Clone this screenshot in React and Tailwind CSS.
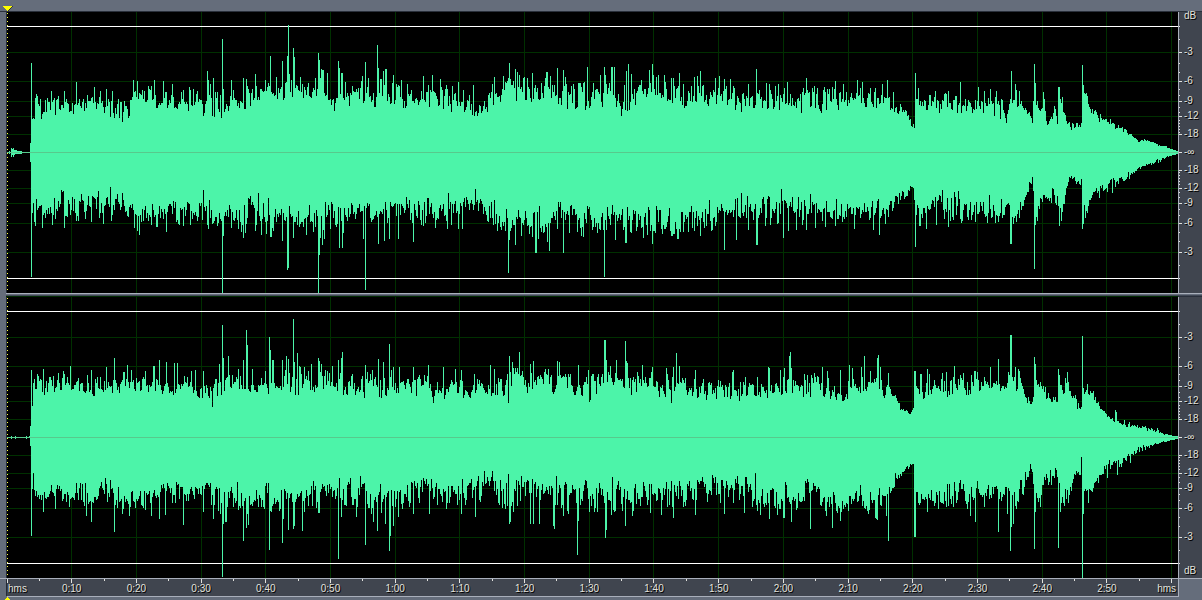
import React from 'react';

const SECONDS = 181;
const COLUMNS = 1171;
const HEIGHT = 281;
const MIDDLE = 140;
const DB_LABELS = [3, 6, 9, 12, 18];

// Each side of a channel is described by
//   body:  [column, lowest level, usual peak] key points
//   peaks: column, level pairs that stand out of the body
const LEFT_UP = {
  seed: 11,
  body: [
    [24, 36, 56], [60, 38, 52], [85, 44, 56], [105, 34, 54], [120, 36, 50], [128, 48, 66], [170, 44, 62],
    [214, 38, 64], [250, 50, 66], [290, 52, 70], [340, 48, 60], [360, 48, 70], [400, 46, 62], [440, 42, 62],
    [467, 36, 54], [480, 42, 54], [500, 50, 70], [560, 50, 70], [570, 42, 64], [600, 50, 70], [615, 38, 60],
    [640, 56, 74], [680, 44, 64], [720, 48, 64], [735, 40, 58], [780, 42, 62], [850, 46, 64], [885, 42, 56],
    [895, 35, 45], [907, 24, 32], [908, 38, 58], [940, 36, 56], [1003, 34, 54], [1004, 50, 68], [1012, 42, 60],
    [1025, 26, 34], [1027, 52, 66], [1036, 34, 56], [1040, 26, 32], [1048, 32, 46], [1050, 26, 34],
    [1052, 54, 62], [1057, 38, 48], [1060, 22, 30], [1074, 25, 32], [1076, 56, 64], [1085, 36, 44],
    [1093, 29, 35], [1103, 25, 31], [1114, 20, 26], [1125, 15, 18], [1131, 10, 11], [1138, 12, 13],
    [1150, 7, 9], [1160, 4, 5], [1170, 1, 1],
  ],
  peaks: [
    2, 1, 4, 4, 5, 3, 6, 4, 7, 2, 8, 2, 9, 2, 10, 1, 11, 1, 12, 1, 13, 1, 14, 1, 23, 9, 24, 89, 25, 33, 30, 56,
    44, 61, 51, 56, 57, 61, 69, 70, 87, 65, 93, 61, 99, 63,
    105, 61, 111, 53, 115, 30, 117, 51, 123, 52, 126, 72, 130, 71, 141, 66, 147, 72, 156, 71, 165, 68, 176, 62,
    186, 63, 196, 36, 200, 81, 201, 72, 206, 74, 214, 34, 215, 113, 224, 72, 236, 74, 239, 73, 248, 78, 258, 72,
    263, 96, 269, 75, 275, 91, 280, 96, 281, 127, 282, 78, 286, 104, 287, 95, 290, 66, 293, 75, 301, 69, 308, 74,
    311, 99, 312, 92, 313, 74, 314, 83, 315, 82, 316, 82, 320, 79, 327, 41, 331, 91, 332, 84, 334, 79, 335, 79,
    338, 70, 355, 76, 358, 90, 361, 74, 370, 107, 371, 84, 373, 73, 374, 73, 376, 81, 378, 83, 379, 83, 386, 77,
    394, 72, 398, 44, 400, 68, 416, 76, 421, 67, 425, 77, 433, 73, 439, 67, 445, 66, 451, 70, 466, 67, 467, 36,
    485, 68, 487, 75, 496, 76, 501, 74, 502, 89, 508, 83, 510, 80, 512, 77, 520, 74, 525, 79, 539, 80, 540, 80,
    543, 76, 550, 84, 556, 82, 558, 75, 560, 43, 571, 69, 580, 85, 586, 69, 593, 77, 597, 85, 598, 77, 604, 85,
    605, 85, 607, 85, 614, 36, 619, 81, 621, 88, 624, 78, 634, 72, 642, 82, 645, 88, 646, 77, 649, 75, 651, 77,
    657, 77, 664, 74, 666, 74, 672, 79, 687, 75, 690, 76, 693, 81, 708, 74, 712, 76, 717, 73, 723, 73, 734, 40,
    741, 68, 749, 83, 759, 69, 762, 68, 768, 66, 771, 68, 780, 70, 799, 74, 807, 66, 828, 71, 836, 68, 850, 72,
    855, 70, 868, 64, 875, 68, 880, 72, 886, 60, 908, 79, 911, 64, 923, 57, 928, 61, 941, 61, 953, 70, 971, 65,
    977, 61, 983, 63, 989, 61, 999, 29, 1004, 81, 1008, 68, 1012, 61, 1027, 88, 1028, 69, 1036, 60, 1047, 46,
    1051, 65, 1052, 65, 1055, 55, 1075, 87, 1076, 67, 1093, 38, 1103, 33,
  ],
};

const LEFT_DOWN = {
  seed: 23,
  body: [
    [24, 48, 66], [60, 38, 66], [80, 44, 66], [110, 38, 64], [125, 50, 70], [170, 46, 68], [195, 44, 66],
    [215, 50, 72], [250, 44, 74], [290, 56, 76], [330, 52, 76], [350, 52, 66], [400, 46, 70], [440, 44, 66],
    [467, 42, 64], [485, 42, 68], [500, 55, 76], [560, 50, 76], [600, 54, 76], [640, 56, 80], [670, 50, 78],
    [700, 50, 72], [735, 42, 68], [780, 44, 70], [840, 50, 68], [880, 48, 66], [892, 40, 50], [906, 28, 36],
    [908, 50, 68], [940, 38, 66], [970, 44, 68], [1002, 44, 66], [1004, 60, 74], [1012, 52, 66], [1018, 38, 44],
    [1025, 24, 32], [1028, 56, 72], [1035, 40, 48], [1050, 36, 50], [1052, 58, 72], [1058, 38, 46],
    [1062, 22, 30], [1074, 22, 30], [1076, 52, 68], [1085, 38, 46], [1100, 30, 40], [1115, 22, 30],
    [1130, 12, 18], [1150, 6, 10], [1160, 3, 4], [1170, 1, 1],
  ],
  peaks: [
    2, 1, 4, 4, 5, 2, 6, 4, 7, 2, 8, 1, 9, 1, 10, 1, 11, 1, 12, 1, 13, 1, 14, 1, 23, 9, 24, 124, 28, 73, 35, 75,
    45, 72, 54, 37, 57, 75, 71, 68, 84, 69, 91, 38, 96, 71,
    103, 34, 127, 75, 130, 78, 132, 82, 144, 72, 149, 74, 150, 74, 159, 79, 176, 73, 183, 72, 196, 37, 200, 72,
    201, 76, 215, 141, 216, 83, 224, 75, 236, 85, 238, 80, 248, 78, 254, 82, 259, 81, 263, 84, 264, 84, 275, 88,
    280, 117, 281, 115, 286, 85, 299, 82, 308, 74, 311, 141, 312, 102, 313, 85, 315, 92, 317, 86, 323, 76,
    332, 95, 335, 95, 336, 80, 356, 86, 358, 137, 371, 91, 377, 88, 382, 86, 391, 86, 406, 89, 416, 73, 428, 75,
    440, 76, 451, 76, 455, 76, 468, 36, 490, 78, 501, 120, 502, 87, 508, 92, 514, 83, 522, 81, 525, 84, 528, 100,
    529, 100, 531, 86, 540, 89, 542, 98, 550, 76, 556, 100, 562, 80, 574, 83, 576, 84, 585, 77, 590, 80, 597, 124,
    608, 87, 618, 90, 619, 90, 623, 79, 636, 85, 640, 82, 645, 91, 654, 76, 663, 78, 666, 81, 667, 81, 670, 86,
    671, 86, 673, 79, 687, 78, 693, 83, 704, 78, 717, 97, 729, 87, 734, 40, 741, 77, 749, 92, 750, 92, 763, 72,
    774, 36, 776, 85, 781, 78, 789, 77, 799, 77, 803, 41, 808, 75, 818, 74, 847, 76, 866, 77, 872, 82, 878, 71,
    908, 94, 912, 73, 913, 73, 919, 76, 929, 72, 941, 74, 955, 68, 968, 69, 980, 70, 997, 62, 1003, 91, 1004, 91,
    1006, 71, 1009, 69, 1012, 65, 1027, 116, 1028, 72, 1030, 68, 1044, 50, 1052, 73, 1054, 68, 1075, 76,
    1078, 65, 1092, 45, 1105, 40, 1121, 19, 1129, 18, 1140, 12,
  ],
};

const RIGHT_UP = {
  seed: 37,
  body: [
    [24, 38, 56], [60, 44, 60], [100, 38, 56], [130, 46, 60], [170, 42, 60], [205, 38, 54], [220, 46, 62],
    [255, 44, 60], [290, 46, 68], [350, 42, 60], [360, 40, 64], [400, 40, 60], [440, 40, 58], [490, 40, 56],
    [502, 46, 66], [560, 44, 62], [580, 38, 58], [600, 48, 64], [665, 42, 60], [700, 38, 56], [757, 37, 52],
    [765, 44, 60], [800, 40, 60], [835, 38, 58], [870, 46, 64], [888, 32, 44], [903, 22, 26], [907, 28, 32],
    [908, 40, 58], [950, 42, 60], [1000, 44, 60], [1012, 48, 62], [1020, 30, 40], [1024, 28, 34], [1028, 52, 60],
    [1040, 34, 48], [1050, 31, 38], [1052, 46, 60], [1056, 38, 48], [1060, 48, 58], [1070, 26, 36],
    [1074, 26, 32], [1076, 44, 52], [1090, 32, 38], [1102, 18, 22], [1115, 12, 18], [1130, 8, 12], [1150, 4, 8],
    [1158, 2, 3], [1170, 1, 1],
  ],
  peaks: [
    4, 1, 8, 1, 19, 1, 22, 1, 23, 11, 24, 67, 25, 31, 30, 63, 36, 68, 51, 64, 56, 66, 63, 71, 80, 62, 84, 67,
    93, 60, 99, 70, 107, 79, 116, 65, 117, 65, 120, 72, 124, 67, 138, 66, 146, 71, 147, 71, 152, 77, 159, 75,
    167, 74, 170, 74, 184, 66, 188, 67, 196, 66, 205, 30, 212, 73, 215, 112, 216, 79, 221, 81, 231, 68, 236, 77,
    239, 107, 240, 92, 245, 68, 258, 66, 262, 100, 263, 87, 265, 77, 266, 77, 275, 77, 279, 81, 281, 78, 286, 118,
    287, 75, 290, 84, 292, 71, 297, 70, 304, 73, 311, 79, 312, 76, 314, 73, 325, 71, 331, 77, 334, 79, 335, 85,
    358, 72, 365, 67, 371, 78, 376, 75, 382, 93, 384, 67, 386, 70, 392, 70, 406, 70, 421, 72, 426, 34, 436, 70,
    448, 68, 454, 67, 467, 63, 483, 72, 487, 68, 501, 34, 502, 81, 505, 75, 512, 85, 523, 73, 526, 76, 538, 68,
    550, 76, 552, 75, 571, 72, 581, 67, 597, 97, 598, 97, 599, 77, 603, 71, 609, 77, 618, 96, 619, 76, 620, 74,
    635, 72, 645, 70, 659, 69, 664, 34, 666, 70, 669, 84, 672, 71, 688, 67, 711, 57, 725, 65, 726, 67, 738, 60,
    750, 60, 761, 70, 762, 69, 773, 67, 777, 69, 782, 81, 783, 85, 784, 69, 800, 62, 815, 70, 820, 66, 833, 67,
    842, 72, 845, 69, 854, 70, 857, 81, 863, 66, 870, 79, 871, 82, 873, 70, 881, 64, 907, 66, 908, 66, 913, 63,
    914, 63, 920, 68, 927, 57, 935, 64, 939, 65, 947, 71, 951, 58, 964, 62, 967, 66, 968, 66, 977, 60, 983, 70,
    991, 78, 1001, 65, 1003, 102, 1004, 102, 1008, 70, 1011, 68, 1012, 66, 1027, 80, 1028, 73, 1033, 55, 1051, 68,
    1052, 62, 1058, 59, 1060, 65, 1075, 101, 1076, 49, 1080, 53, 1086, 46, 1108, 27, 1109, 25,
  ],
};

const RIGHT_DOWN = {
  seed: 53,
  body: [
    [24, 50, 56], [35, 46, 64], [60, 48, 66], [100, 42, 62], [110, 50, 72], [130, 50, 68], [160, 46, 66],
    [200, 44, 60], [215, 46, 74], [245, 46, 70], [290, 48, 72], [320, 42, 64], [360, 42, 70], [390, 48, 72],
    [405, 40, 62], [450, 44, 64], [480, 36, 62], [500, 38, 70], [520, 46, 72], [560, 42, 70], [590, 40, 68],
    [620, 48, 70], [660, 42, 68], [710, 36, 62], [740, 40, 64], [765, 48, 74], [800, 44, 66], [820, 50, 76],
    [850, 46, 68], [870, 46, 78], [885, 36, 50], [895, 34, 38], [903, 22, 28], [907, 25, 28], [909, 50, 64],
    [950, 46, 66], [1000, 46, 66], [1008, 54, 70], [1015, 36, 56], [1023, 22, 32], [1028, 50, 68],
    [1040, 32, 48], [1050, 26, 38], [1053, 50, 68], [1064, 48, 60], [1066, 36, 42], [1073, 28, 38],
    [1074, 18, 20], [1076, 48, 64], [1090, 36, 48], [1104, 18, 32], [1112, 20, 30], [1125, 12, 20],
    [1140, 6, 11], [1158, 3, 4], [1170, 1, 1],
  ],
  peaks: [
    4, 1, 8, 1, 19, 1, 23, 8, 24, 98, 26, 35, 36, 74, 48, 71, 62, 69, 79, 78, 84, 84, 107, 94, 115, 76, 122, 78,
    138, 72, 144, 78, 152, 81, 158, 77, 176, 87, 196, 74, 206, 81, 215, 139, 216, 86, 218, 84, 219, 84, 236, 103,
    239, 90, 241, 87, 262, 112, 263, 73, 275, 105, 276, 81, 281, 92, 286, 91, 287, 88, 295, 93, 297, 74, 311, 75,
    312, 75, 331, 121, 334, 79, 349, 79, 358, 107, 366, 84, 370, 93, 378, 86, 382, 113, 383, 98, 386, 88, 391, 79,
    406, 76, 422, 76, 439, 71, 454, 76, 468, 79, 477, 33, 485, 33, 501, 36, 502, 86, 503, 84, 506, 74, 523, 86,
    526, 86, 532, 86, 546, 88, 547, 91, 561, 76, 570, 117, 571, 83, 582, 74, 598, 100, 599, 92, 604, 77, 618, 88,
    625, 78, 643, 75, 654, 77, 666, 80, 688, 77, 717, 76, 737, 75, 748, 35, 753, 77, 762, 81, 776, 80, 777, 80,
    784, 84, 803, 91, 819, 78, 825, 90, 833, 83, 869, 81, 870, 82, 879, 78, 881, 103, 907, 99, 908, 99, 920, 74,
    931, 71, 946, 69, 963, 78, 968, 84, 991, 94, 1000, 76, 1003, 113, 1004, 89, 1006, 86, 1027, 111, 1028, 74,
    1031, 64, 1033, 69, 1051, 110, 1053, 74, 1075, 141, 1076, 76, 1081, 65, 1085, 54, 1100, 40, 1110, 37,
    1123, 25,
  ],
};

// Small seeded generator, so that a side always has the same grain
function createRandom(seed) {
  let state = seed;
  return () => {
    state = (state * 16807) % 2147483647;
    return state / 2147483647;
  };
}

function buildLevels({ seed, body, peaks }) {
  const random = createRandom(seed * 7919);
  const levels = new Array(COLUMNS).fill(0);
  let swell = 0.5;
  for (let i = 1; i < body.length; i++) {
    const [x0, low0, high0] = body[i - 1];
    const [x1, low1, high1] = body[i];
    for (let x = x0; x <= x1; x++) {
      const t = (x - x0) / (x1 - x0);
      const low = low0 + (low1 - low0) * t;
      const high = high0 + (high1 - high0) * t;
      // neighbouring columns often share a swell
      if (random() < 0.6) swell = random();
      const grain = swell * 1.05 + random() * 0.5 - 0.25;
      levels[x] = Math.round(low + (high - low) * grain);
    }
  }
  for (let i = 0; i < peaks.length; i += 2) {
    levels[peaks[i]] = peaks[i + 1];
  }
  return levels;
}

function buildWavePath(upper, lower) {
  const up = buildLevels(upper);
  const down = buildLevels(lower);
  let d = `M0 ${MIDDLE}`;
  for (let x = 0; x < COLUMNS; x++) d += `V${MIDDLE - up[x]}h1`;
  for (let x = COLUMNS - 1; x >= 0; x--) d += `V${Math.min(MIDDLE + 1 + down[x], HEIGHT)}h-1`;
  return d + 'z';
}

const WAVES = {
  left: buildWavePath(LEFT_UP, LEFT_DOWN),
  right: buildWavePath(RIGHT_UP, RIGHT_DOWN),
};

const dbOffset = (db) => Math.ceil(141 * Math.pow(10, -db / 20));
const secondToX = (s) => Math.floor((s * COLUMNS) / SECONDS);
const TENS = Array.from({ length: 18 }, (_, i) => (i + 1) * 10);
const formatTime = (s) => `${Math.floor(s / 60)}:${String(s % 60).padStart(2, '0')}`;

export default function App() {
  return (
    <main className="flex h-screen flex-col overflow-hidden bg-[#656d7b] font-['Liberation_Sans',Arial,sans-serif] text-[10px] leading-3 text-[#e2e2de]">
      <header className="flex h-[11px] shrink-0 items-end pl-[3px]">
        <svg className="h-[5px] w-[10px]" viewBox="0 0 10 5" shapeRendering="crispEdges" aria-hidden="true">
          <path fill="#30343a" d="M1 0h9v1h-1v1h-1v1h-1v1h-1v1h-2z" />
          <path fill="#ffff00" d="M0 0h9v1h-1v1h-1v1h-1v1h-1v1h-1v-1h-1v-1h-1v-1h-1v-1h-1z" />
        </svg>
      </header>

      <div className="flex min-h-0 flex-1 flex-col border-t border-[#2a303b] pl-[6px]">
        <Channel name="Left channel" wave={WAVES.left} unitFirst />
        <div className="flex h-1 shrink-0 flex-col border-t border-[#a9afbb]">
          <div className="h-px" />
          <div className="h-px bg-[#414856]" />
          <div className="flex h-px">
            <div className="flex-1 bg-[#002a00]" />
            <div className="w-6 bg-[#2a303b]" />
          </div>
        </div>
        <Channel name="Right channel" wave={WAVES.right} />
      </div>

      <TimeRuler />

      <footer className="flex h-[3px] shrink-0 pl-[5px]">
        <svg className="h-[3px] w-[5px]" viewBox="0 0 5 3" shapeRendering="crispEdges" aria-hidden="true">
          <path fill="#ffff00" d="M2 0h1v1h1v1h1v1H0v-1h1v-1h1z" />
        </svg>
      </footer>
    </main>
  );
}

function Channel({ name, wave, unitFirst = false }) {
  return (
    <section aria-label={name} className="flex min-h-0 flex-1 basis-0">
      <div className="min-w-0 flex-1 border-l border-[#252c38] bg-black">
        <svg
          className="block h-full w-full"
          viewBox={`0 0 ${COLUMNS} ${HEIGHT}`}
          preserveAspectRatio="none"
          shapeRendering="crispEdges"
          role="img"
          aria-label={`${name} waveform`}
        >
          <g fill="#003000">
            {DB_LABELS.map((db) => (
              <React.Fragment key={db}>
                <rect x="0" y={MIDDLE - dbOffset(db)} width={COLUMNS} height="1" />
                <rect x="0" y={MIDDLE + dbOffset(db)} width={COLUMNS} height="1" />
              </React.Fragment>
            ))}
            {TENS.map((s) => (
              <rect key={s} x={secondToX(s)} y="0" width="1" height={HEIGHT} />
            ))}
          </g>
          <rect x="0" y={MIDDLE - 126} width={COLUMNS} height="1" fill="#ffffff" />
          <rect x="0" y={MIDDLE + 126} width={COLUMNS} height="1" fill="#ffffff" />
          <path d={wave} fill="#4cf4a9" />
          <rect x="0" y={MIDDLE} width={COLUMNS} height="1" fill="#57c98c" />
          {Array.from({ length: 70 }, (_, i) => (
            <rect key={i} x="0" y={i * 4 + 1} width="1" height="1" fill="#ffff40" />
          ))}
        </svg>
      </div>
      <LevelRuler unitFirst={unitFirst} />
    </section>
  );
}

function LevelRuler({ unitFirst }) {
  const upper = DB_LABELS.map((db) => ({ text: `-${db}`, at: MIDDLE - dbOffset(db) }));
  const lower = DB_LABELS.map((db) => ({ text: `-${db}`, at: MIDDLE + dbOffset(db) })).reverse();
  const labels = [...upper, { text: '-∞', at: MIDDLE }, ...lower];
  if (unitFirst) labels.unshift({ text: 'dB', at: 4 });
  else labels.push({ text: 'dB', at: 274 });
  const end = labels[labels.length - 1].at;

  return (
    <div className="flex w-6 shrink-0 border-l border-[#a9afbb] bg-[#40454f]">
      <svg
        className="block h-full w-[3px] shrink-0"
        viewBox={`0 0 3 ${HEIGHT}`}
        preserveAspectRatio="none"
        shapeRendering="crispEdges"
        fill="#e2e2de"
        aria-hidden="true"
      >
        <rect y={MIDDLE} width="3" height="1" />
        {Array.from({ length: 18 }, (_, i) => i + 1).map((db) => {
          const width = DB_LABELS.includes(db) ? 3 : 1;
          return (
            <React.Fragment key={db}>
              <rect y={MIDDLE - dbOffset(db)} width={width} height="1" />
              <rect y={MIDDLE + dbOffset(db)} width={width} height="1" />
            </React.Fragment>
          );
        })}
      </svg>
      <ul className="flex min-h-0 flex-1 flex-col pl-[2px] [text-shadow:1px_1px_0_#000]">
        {labels.map(({ text, at }, i) => (
          <li
            key={at}
            className="flex min-h-0 items-end"
            style={{ flex: `${at - (i ? labels[i - 1].at : 0)} 1 0px` }}
          >
            <span className="translate-y-1/2">{text}</span>
          </li>
        ))}
        <li aria-hidden="true" className="min-h-0" style={{ flex: `${HEIGHT - end} 1 0px` }} />
      </ul>
    </div>
  );
}

function TimeRuler() {
  return (
    <div className="flex shrink-0 border-t border-[#a9afbb] pl-[6px]">
      <div className="min-w-0 flex-1 border-b border-l border-b-[#a9afbb] border-l-[#252c38] bg-[#40454f]">
        <svg
          className="block h-1 w-full"
          viewBox={`0 0 ${COLUMNS} 4`}
          preserveAspectRatio="none"
          shapeRendering="crispEdges"
          fill="#e2e2de"
          aria-hidden="true"
        >
          <rect x="0" width="1" height="4" />
          {TENS.map((s) => (
            <React.Fragment key={s}>
              <rect x={secondToX(s - 5)} width="1" height="2" />
              <rect x={secondToX(s)} width="1" height="4" />
            </React.Fragment>
          ))}
        </svg>
        <div className="flex h-[13px] [text-shadow:1px_1px_0_#000]">
          <div className="min-w-0 flex-[5_1_0px]">
            <span className="pl-px">hms</span>
          </div>
          {TENS.slice(0, 17).map((s) => (
            <time key={s} className="min-w-0 flex-[10_1_0px] text-center">
              {formatTime(s)}
            </time>
          ))}
          <div className="min-w-0 flex-[6_1_0px] text-right">
            <span className="pr-[2px]">hms</span>
          </div>
        </div>
      </div>
      <div className="w-6 shrink-0">
        <div className="h-full w-px bg-[#a9afbb]" />
      </div>
    </div>
  );
}
